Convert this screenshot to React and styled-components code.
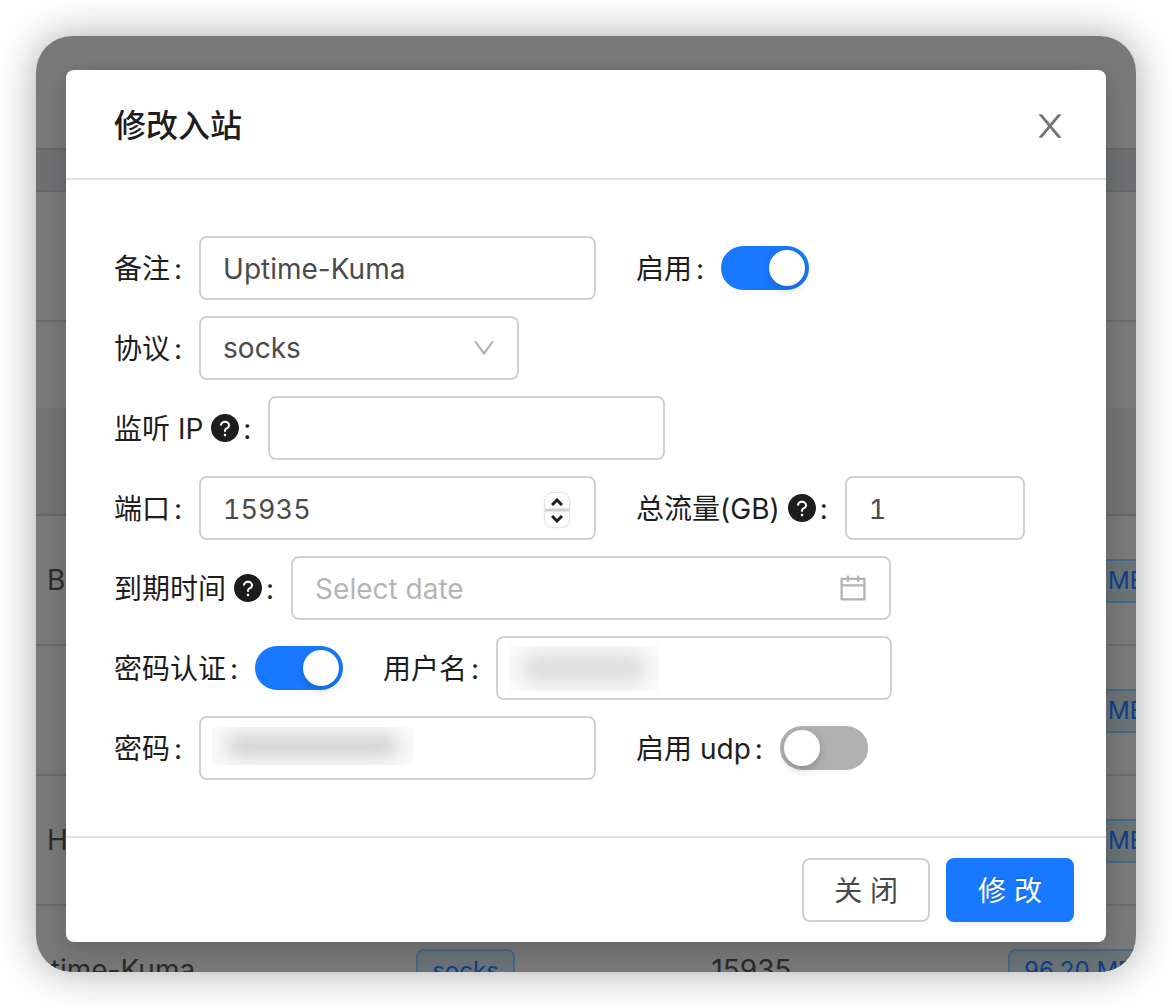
import React from "react";
import styled, { createGlobalStyle, css } from "styled-components";

const GlobalStyle = createGlobalStyle`
  *, *::before, *::after { box-sizing: border-box; }
  body {
    margin: 0;
    background: #fff;
    color: #1d1d1d;
    font-family: Inter, "Noto Sans CJK SC", sans-serif;
    font-size: 28px;
    line-height: 44px;
  }
  button, input, select { font: inherit; }
`;

const Page = styled.div`
  padding: 36px;
`;

const Shell = styled.div`
  position: relative;
  overflow: hidden;
  padding: 34px 30px 30px;
  border-radius: 36px;
  background: #797979;
`;

const Glow = styled.div`
  border-radius: 36px;
  box-shadow: 0 0 40px rgba(0, 0, 0, 0.34);
`;

/* Dimmed page behind the dialog */
const Behind = styled.div`
  position: absolute;
  inset: 0;
  overflow: hidden;
`;

const TopArea = styled.div`
  height: 112px;
`;

const Band = styled.div`
  height: 44px;
  border: solid #666869;
  border-width: 2px 0;
  background: #6d6f71;
`;

const Summary = styled.div`
  height: 130px;
  border-bottom: 2px solid #6b6b6b;
`;

const Toolbar = styled.div`
  height: 86px;
`;

const Table = styled.table`
  width: calc(100% + 136px);
  margin-left: -36px;
  border-collapse: collapse;
  table-layout: fixed;
  color: #2b2b2b;
  text-align: center;
`;

const HeadCell = styled.th`
  width: ${(p) => p.$width};
  height: 107px;
  padding: 0;
  border-bottom: 2px solid #666;
  background: #737373;
`;

const Cell = styled.td`
  height: 130px;
  padding: 0;
  border-bottom: 2px solid #6b6b6b;
  text-align: ${(p) => (p.$start ? "left" : "center")};
  white-space: nowrap;
`;

const NameCell = styled(Cell)`
  padding-right: 22px;
`;

const Name = styled.span`
  display: inline-block;
  min-width: 114px;
  text-align: left;
`;

const Tag = styled.span`
  display: inline-block;
  padding: 0 14px 0 ${(p) => (p.$lead ? "98px" : "14px")};
  border: 2px solid #42698a;
  border-radius: 8px;
  background: #6a7276;
  color: #0d3f88;
  font-size: 24px;
  line-height: 40px;
  vertical-align: middle;
`;

const Dialog = styled.section`
  position: relative;
  border-radius: 8px;
  background: #fff;
  box-shadow: 0 8px 24px rgba(0, 0, 0, 0.18);
`;

const Header = styled.header`
  display: flex;
  align-items: center;
  justify-content: space-between;
  height: 110px;
  padding: 4px 40px 0 48px;
  border-bottom: 2px solid #e3e3e3;
`;

const Title = styled.h1`
  margin: 0;
  font-size: 32px;
  line-height: 44px;
  font-weight: 500;
`;

const CloseButton = styled.button`
  display: flex;
  padding: 0;
  border: 0;
  background: none;
  color: #757575;
`;

const Form = styled.form`
  display: flex;
  flex-direction: column;
  gap: 16px;
  padding: 56px 48px;
`;

const Row = styled.div`
  display: flex;
  flex-wrap: wrap;
  column-gap: 40px;
  row-gap: 16px;
`;

const Field = styled.div`
  display: flex;
  align-items: center;
  min-height: 64px;
`;

const Label = styled.label`
  display: flex;
  align-items: center;
  padding-top: 2px;
  white-space: nowrap;

  &::after {
    content: ":";
    margin: 0 17px 0 4px;
  }
`;

const Icon = styled.svg`
  display: block;
  flex: none;
  fill: currentColor;
  width: ${(p) => p.$size}px;
  height: ${(p) => p.$size}px;
`;

const HelpIcon = styled(Icon)`
  margin: 0 0 2px 8px;
`;

const Control = styled.div`
  position: relative;
  width: ${(p) => p.$width}px;
`;

const box = css`
  display: block;
  width: 100%;
  height: 64px;
  padding: 0 22px;
  border: 2px solid #d0d0d0;
  border-radius: 8px;
  outline: none;
  background: #fff;
  color: #4b4b4b;
`;

const TextInput = styled.input`
  ${box}
  padding-top: 2px;

  &::placeholder { color: #b5b5b5; opacity: 1; }
`;

const NumberInput = styled(TextInput).attrs({ type: "number" })`
  appearance: textfield;
  font-size: 27px;
  font-variant-numeric: tabular-nums;

  &::-webkit-inner-spin-button { appearance: none; }
`;

const Select = styled.select`
  ${box}
  appearance: none;
`;

const Adornment = styled.span`
  position: absolute;
  top: 0;
  right: ${(p) => p.$right}px;
  display: flex;
  align-items: center;
  height: 100%;
  color: #b3b3b3;
  pointer-events: none;
`;

const Stepper = styled.span`
  display: grid;
  grid-template-rows: 1fr 1fr;
  place-items: center;
  width: 24px;
  height: 34px;
  margin-top: 4px;
  border-radius: 8px;
  background: linear-gradient(#fff 44%, #cfcfcf 47%, #cfcfcf 53%, #fff 56%);
  box-shadow: 0 0 2px rgba(0, 0, 0, 0.45);
`;

const Arrow = styled.svg`
  display: block;
  width: 12px;
  height: 8px;
  fill: none;
  stroke: #1f1f1f;
  stroke-width: 3;
`;

const Redacted = styled.span`
  position: absolute;
  top: ${(p) => p.$top}px;
  left: 13px;
  width: ${(p) => p.$width}px;
  height: ${(p) => p.$height}px;
  overflow: hidden;
  background: #fafafa;
  pointer-events: none;

  &::before {
    content: "";
    position: absolute;
    inset: 8px 14px;
    border-radius: 12px;
    background: ${(p) => p.$tone};
    filter: blur(9px);
  }
`;

const Switch = styled.input.attrs({ type: "checkbox", role: "switch" })`
  appearance: none;
  display: flex;
  align-items: center;
  width: 88px;
  height: 44px;
  margin: 0;
  padding: 4px;
  border-radius: 22px;
  background: #b0b0b0;

  &::before {
    content: "";
    width: 36px;
    height: 36px;
    border-radius: 50%;
    background: #fff;
    box-shadow: 0 4px 8px rgba(0, 35, 11, 0.2);
  }

  &:checked {
    justify-content: flex-end;
    background: #1878ff;
  }
`;

const Footer = styled.footer`
  display: flex;
  justify-content: flex-end;
  gap: 16px;
  padding: 20px 32px;
  border-top: 2px solid #e3e3e3;
`;

const Button = styled.button`
  height: 64px;
  padding: 2px 30px 0;
  border: 2px solid ${(p) => (p.$primary ? "#1878ff" : "#d0d0d0")};
  border-radius: 8px;
  background: ${(p) => (p.$primary ? "#1878ff" : "#fff")};
  color: ${(p) => (p.$primary ? "#fff" : "#484848")};
  text-shadow: ${(p) => (p.$primary ? "0 -2px 0 rgba(0, 0, 0, 0.12)" : "none")};
  box-shadow: 0 4px 0 ${(p) => (p.$primary ? "rgba(0, 0, 0, 0.045)" : "rgba(0, 0, 0, 0.016)")};
`;

const VIEW = "64 64 896 896";

const Help = () => (
  <HelpIcon $size={28} viewBox={VIEW} aria-hidden="true">
    <path d="M512 64C264.6 64 64 264.6 64 512s200.6 448 448 448 448-200.6 448-448S759.4 64 512 64zm0 708c-22.1 0-40-17.9-40-40s17.9-40 40-40 40 17.9 40 40-17.9 40-40 40zm62.9-219.5a48.3 48.3 0 0 0-30.9 44.8V620c0 4.4-3.6 8-8 8h-48c-4.4 0-8-3.6-8-8v-21.5c0-23.1 6.7-45.9 19.9-64.9 12.9-18.6 30.9-32.8 52.1-40.9 34-13.1 56-41.6 56-72.7 0-44.1-43.1-80-96-80s-96 35.9-96 80v7.6c0 4.4-3.6 8-8 8h-48c-4.4 0-8-3.6-8-8V420c0-39.3 17.2-76 48.4-103.3C430.4 290.4 470 276 512 276s81.6 14.5 111.6 40.7C654.8 344 672 380.7 672 420c0 57.8-38.1 109.8-97.1 132.5z" />
  </HelpIcon>
);

const FormField = ({ id, label, help, children }) => (
  <Field>
    <Label htmlFor={id}>
      {label}
      {help && <Help />}
    </Label>
    {children}
  </Field>
);

const rows = [
  { name: "Ba", traffic: "MB" },
  { name: "", traffic: "MB" },
  { name: "H", traffic: "MB" },
  { name: "Uptime-Kuma", protocol: "socks", port: "15935", traffic: "96.20 MB" },
];

const Background = () => (
  <Behind aria-hidden="true">
    <TopArea />
    <Band />
    <Summary />
    <Toolbar />
    <Table>
      <thead>
        <tr>
          <HeadCell $width="230px" />
          <HeadCell $width="471px" />
          <HeadCell $width="101px" />
          <HeadCell $width="206px" />
          <HeadCell />
        </tr>
      </thead>
      <tbody>
        {rows.map((row, i) => (
          <tr key={i}>
            <NameCell><Name>{row.name}</Name></NameCell>
            <Cell>{row.protocol && <Tag>{row.protocol}</Tag>}</Cell>
            <Cell>{row.port}</Cell>
            <Cell />
            <Cell $start><Tag $lead={!row.port}>{row.traffic}</Tag></Cell>
          </tr>
        ))}
      </tbody>
    </Table>
  </Behind>
);

export default function App() {
  return (
    <Page>
      <GlobalStyle />
      <Glow>
        <Shell>
          <Background />
          <Dialog role="dialog" aria-labelledby="dialog-title">
            <Header>
              <Title id="dialog-title">修改入站</Title>
              <CloseButton type="button" aria-label="关闭">
                <Icon $size={32} viewBox={VIEW} aria-hidden="true">
                  <path d="M563.8 512l262.5-312.9c4.4-5.2.7-13.1-6.1-13.1h-79.8c-4.7 0-9.2 2.1-12.3 5.7L511.6 449.8 295.1 191.7c-3-3.6-7.5-5.7-12.3-5.7H203c-6.8 0-10.5 7.9-6.1 13.1L459.4 512 196.9 824.9A7.95 7.95 0 0 0 203 838h79.8c4.7 0 9.2-2.1 12.3-5.7l216.5-258.1 216.5 258.1c3 3.6 7.5 5.7 12.3 5.7h79.8c6.8 0 10.5-7.9 6.1-13.1L563.8 512z" />
                </Icon>
              </CloseButton>
            </Header>

            <Form id="inbound" onSubmit={(e) => e.preventDefault()}>
              <Row>
                <FormField id="remark" label="备注">
                  <Control $width={397}>
                    <TextInput id="remark" type="text" defaultValue="Uptime-Kuma" />
                  </Control>
                </FormField>
                <FormField id="enable" label="启用">
                  <Switch id="enable" defaultChecked />
                </FormField>
              </Row>
              <Row>
                <FormField id="protocol" label="协议">
                  <Control $width={320}>
                    <Select id="protocol" defaultValue="socks">
                      <option value="socks">socks</option>
                    </Select>
                    <Adornment $right={23}>
                      <Icon $size={24} viewBox={VIEW} aria-hidden="true">
                        <path d="M884 256h-75c-5.1 0-9.9 2.5-12.9 6.6L512 654.2 227.9 262.6c-3-4.1-7.8-6.6-12.9-6.6h-75c-6.5 0-10.3 7.4-6.5 12.7l352.6 486.1c12.8 17.6 39 17.6 51.7 0l352.6-486.1c3.9-5.3.1-12.7-6.4-12.7z" />
                      </Icon>
                    </Adornment>
                  </Control>
                </FormField>
              </Row>
              <Row>
                <FormField id="listen" label="监听 IP" help>
                  <Control $width={397}>
                    <TextInput id="listen" type="text" />
                  </Control>
                </FormField>
              </Row>
              <Row>
                <FormField id="port" label="端口">
                  <Control $width={397}>
                    <NumberInput id="port" defaultValue="15935" />
                    <Adornment $right={27}>
                      <Stepper>
                        <Arrow viewBox="0 0 12 8"><path d="M1 7 6 2l5 5" /></Arrow>
                        <Arrow viewBox="0 0 12 8"><path d="M1 1l5 5 5-5" /></Arrow>
                      </Stepper>
                    </Adornment>
                  </Control>
                </FormField>
                <FormField id="total" label="总流量(GB)" help>
                  <Control $width={180}>
                    <NumberInput id="total" defaultValue="1" />
                  </Control>
                </FormField>
              </Row>
              <Row>
                <FormField id="expiry" label="到期时间" help>
                  <Control $width={600}>
                    <TextInput id="expiry" type="text" placeholder="Select date" />
                    <Adornment $right={24}>
                      <Icon $size={28} viewBox={VIEW} aria-hidden="true">
                        <path d="M880 184H712v-64c0-4.4-3.6-8-8-8h-56c-4.4 0-8 3.6-8 8v64H384v-64c0-4.4-3.6-8-8-8h-56c-4.4 0-8 3.6-8 8v64H144c-17.7 0-32 14.3-32 32v664c0 17.7 14.3 32 32 32h736c17.7 0 32-14.3 32-32V216c0-17.7-14.3-32-32-32zm-40 656H184V460h656v380zM184 392V256h128v48c0 4.4 3.6 8 8 8h56c4.4 0 8-3.6 8-8v-48h256v48c0 4.4 3.6 8 8 8h56c4.4 0 8-3.6 8-8v-48h128v136H184z" />
                      </Icon>
                    </Adornment>
                  </Control>
                </FormField>
              </Row>
              <Row>
                <FormField id="auth" label="密码认证">
                  <Switch id="auth" defaultChecked />
                </FormField>
                <FormField id="user" label="用户名">
                  <Control $width={396}>
                    <TextInput id="user" type="text" />
                    <Redacted $top={10} $width={150} $height={45} $tone="#dcdcdc" />
                  </Control>
                </FormField>
              </Row>
              <Row>
                <FormField id="password" label="密码">
                  <Control $width={397}>
                    <TextInput id="password" type="text" />
                    <Redacted $top={11} $width={201} $height={38} $tone="#d0d0d0" />
                  </Control>
                </FormField>
                <FormField id="udp" label="启用 udp">
                  <Switch id="udp" />
                </FormField>
              </Row>
            </Form>

            <Footer>
              <Button type="button">关 闭</Button>
              <Button type="submit" form="inbound" $primary>修 改</Button>
            </Footer>
          </Dialog>
        </Shell>
      </Glow>
    </Page>
  );
}
